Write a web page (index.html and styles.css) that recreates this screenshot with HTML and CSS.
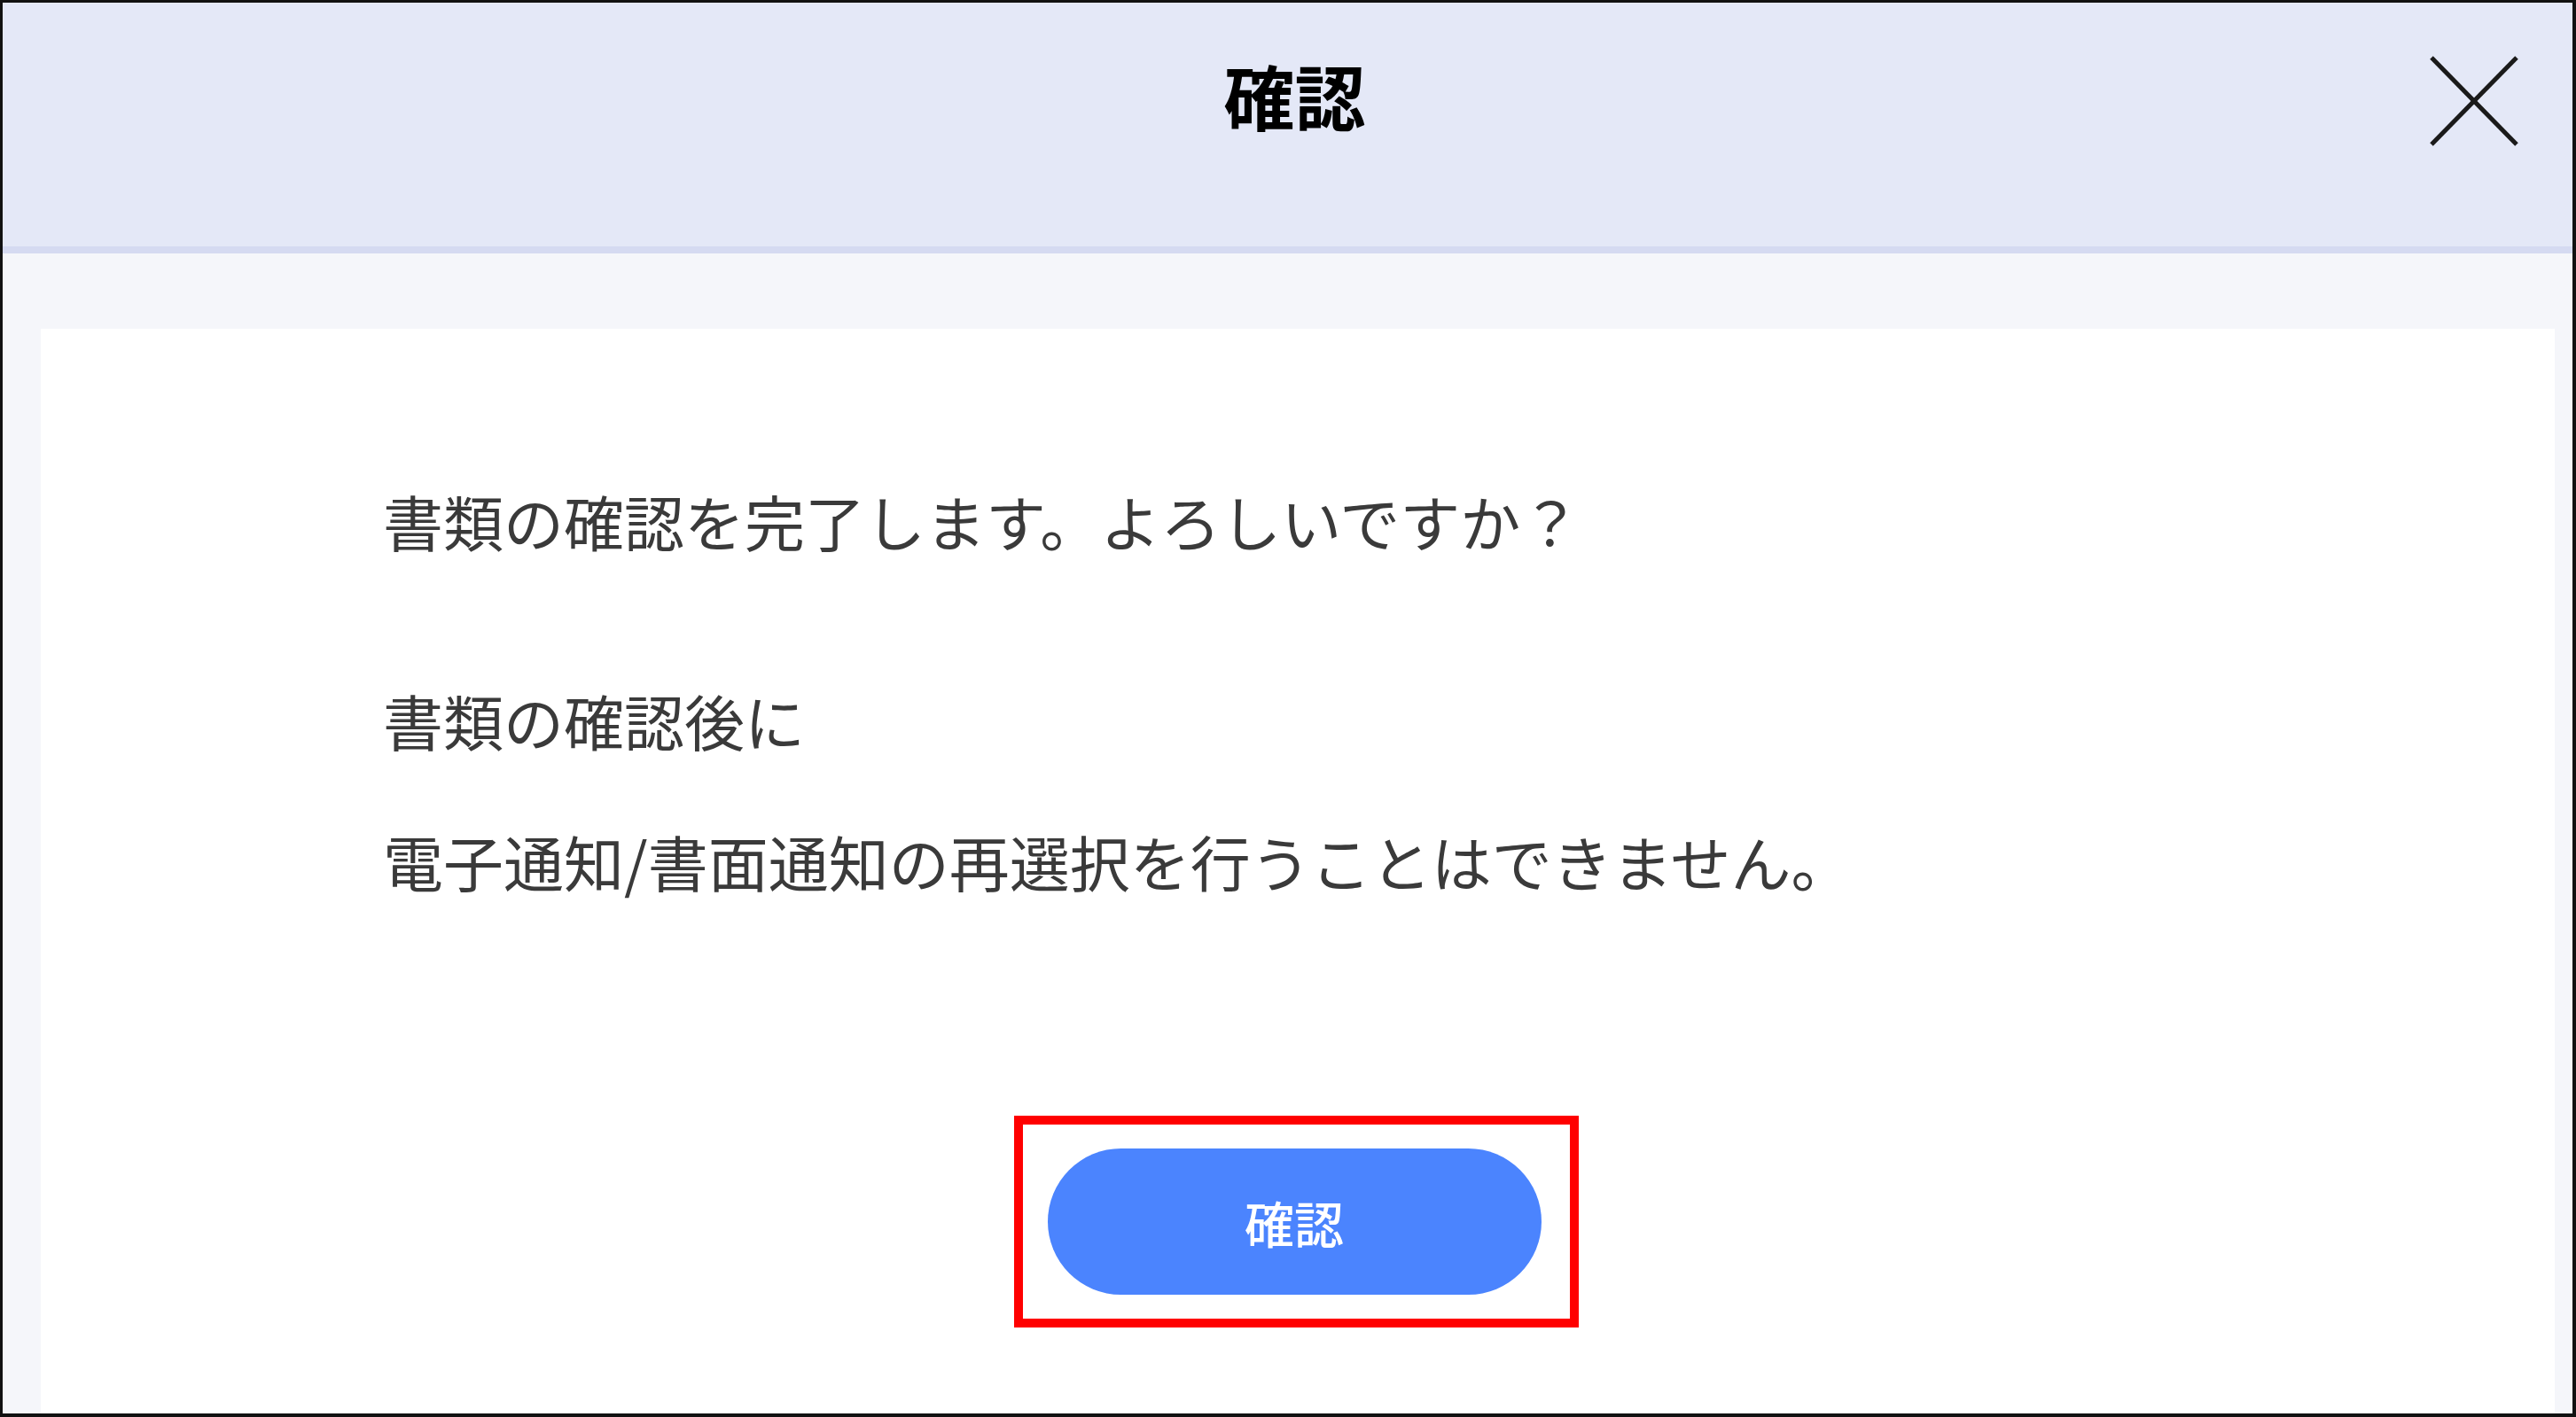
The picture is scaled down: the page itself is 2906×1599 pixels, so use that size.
FILE: index.html
```html
<!DOCTYPE html>
<html lang="ja">
<head>
<meta charset="utf-8">
<title>確認</title>
<link rel="stylesheet" href="styles.css">
</head>
<body>
<div class="frame">
  <header class="dialog-header">
    <div class="spacer"></div>
    <h1 class="dialog-title">確認</h1>
    <button class="close-btn" aria-label="閉じる">
      <svg width="104" height="106" viewBox="0 0 104 106">
        <line x1="4" y1="4" x2="100" y2="102" stroke="#1a1a1a" stroke-width="5"/>
        <line x1="100" y1="4" x2="4" y2="102" stroke="#1a1a1a" stroke-width="5"/>
      </svg>
    </button>
  </header>
  <div class="dialog-body">
    <div class="panel">
      <div class="message">
        <p class="msg-line">書類の確認を完了します。よろしいですか？</p>
        <p class="msg-line">書類の確認後に<br>電子通知/書面通知の再選択を行うことはできません。</p>
      </div>
      <div class="actions">
        <div class="highlight">
          <button class="confirm-btn">確認</button>
        </div>
      </div>
    </div>
  </div>
</div>
</body>
</html>
```

FILE: styles.css
```css
html, body {
  margin: 0;
  padding: 0;
  background: #ffffff;
}

body {
  font-family: "Noto Sans CJK JP", "Noto Sans", sans-serif;
}

.frame {
  width: 2906px;
  height: 1599px;
  box-sizing: border-box;
  border: 3px solid #111111;
  border-right-width: 4px;
  border-bottom-width: 4px;
  display: flex;
  flex-direction: column;
  overflow: hidden;
}

.dialog-header {
  flex: 0 0 auto;
  height: 275px;
  box-sizing: content-box;
  background: #e4e8f7;
  border-bottom: 8px solid #d5daf1;
  display: grid;
  grid-template-columns: 1fr auto 1fr;
  align-items: start;
  padding-left: 16px;
}

.dialog-title {
  margin: 63px 0 0 0;
  font-size: 80px;
  line-height: 80px;
  font-weight: 700;
  color: #000000;
}

.close-btn {
  justify-self: end;
  margin: 58px 59px 0 0;
  padding: 0;
  border: 0;
  background: transparent;
  width: 104px;
  height: 106px;
  display: block;
}

.close-btn svg {
  display: block;
}

.dialog-body {
  flex: 1 1 auto;
  background: #f5f6fa;
  padding: 85px 20px 0 43px;
  display: flex;
  min-height: 0;
}

.panel {
  flex: 1 1 auto;
  background: #ffffff;
  padding-top: 137px;
  display: flex;
  flex-direction: column;
}

.message {
  padding-left: 386px;
  color: #3a3a3a;
  font-size: 68px;
  line-height: 159px;
}

.msg-line {
  margin: 0 0 66px 0;
}

.msg-line:last-child {
  margin-bottom: 0;
}

.actions {
  display: flex;
  justify-content: center;
  margin-top: 208px;
}

.highlight {
  border: 10px solid #ff0000;
  padding: 27px 32px 27px 28px;
  display: flex;
  margin-left: -4px;
}

.confirm-btn {
  width: 557px;
  height: 165px;
  border: 0;
  border-radius: 83px;
  background: #4b84fe;
  color: #ffffff;
  font-family: "Noto Sans CJK JP", "Noto Sans", sans-serif;
  font-size: 56px;
  font-weight: 500;
  line-height: 1;
  padding: 0;
}
```
